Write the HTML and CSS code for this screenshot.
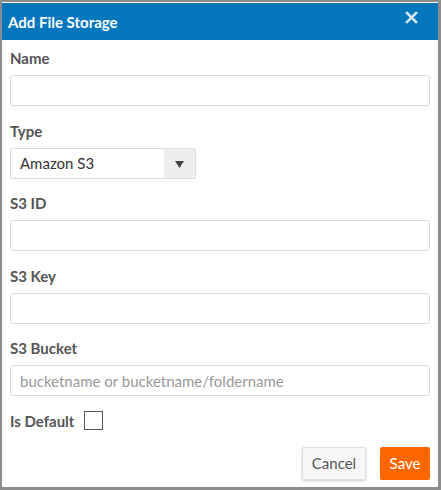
FILE: index.html
```html
<!DOCTYPE html>
<html>
<head>
<meta charset="utf-8">
<link rel="stylesheet" href="styles.css">
</head>
<body>
<div class="dialog">
  <div class="header">
    <span class="title">Add File Storage</span>
    <svg class="close" width="13" height="13" viewBox="0 0 13 13"><path d="M2 2 L11 11 M11 2 L2 11" stroke="#d6e8f5" stroke-width="2.6" stroke-linecap="square"/></svg>
  </div>
  <div class="body">
    <div class="group">
      <label class="label">Name</label>
      <input class="input" type="text">
    </div>
    <div class="group">
      <label class="label">Type</label>
      <div class="select">
        <span class="select-value">Amazon S3</span>
        <span class="select-btn"><svg width="9" height="7" viewBox="0 0 9 7"><path d="M0 0 H9 L4.5 7 Z" fill="#444"/></svg></span>
      </div>
    </div>
    <div class="group">
      <label class="label">S3 ID</label>
      <input class="input" type="text">
    </div>
    <div class="group">
      <label class="label">S3 Key</label>
      <input class="input" type="text">
    </div>
    <div class="group">
      <label class="label">S3 Bucket</label>
      <input class="input" type="text" placeholder="bucketname or bucketname/foldername">
    </div>
    <div class="check-row">
      <span class="label inline">Is Default</span>
      <span class="checkbox"></span>
    </div>
    <div class="actions">
      <button class="btn cancel">Cancel</button>
      <button class="btn save">Save</button>
    </div>
  </div>
</div>
</body>
</html>
```
FILE: styles.css
```css
html, body {
  margin: 0;
  padding: 0;
  background: #fff;
}
.dialog {
  width: 441px;
  height: 490px;
  box-sizing: border-box;
  border-style: solid;
  border-color: #8c8c8c;
  border-width: 2px 3px 3px 2px;
  background: #fff;
  font-family: Lato, "Liberation Sans", sans-serif;
  display: flex;
  flex-direction: column;
}
.header {
  margin-top: 1px;
  height: 37px;
  background: #0277bd;
  display: flex;
  align-items: center;
  justify-content: space-between;
  padding: 0 20px 0 6px;
}
.title {
  color: #fff;
  font-size: 15px;
  font-weight: bold;
  margin-top: 1px;
}
.close {
  margin-top: -8px;
}
.body {
  padding: 8px 8px 0 8px;
  display: flex;
  flex-direction: column;
}
.group {
  display: flex;
  flex-direction: column;
  margin-bottom: 14.5px;
}
.label {
  font-size: 15px;
  font-weight: bold;
  color: #555;
  line-height: 20px;
  margin-bottom: 7px;
}
.label.inline {
  margin-bottom: 0;
}
.input {
  height: 31px;
  box-sizing: border-box;
  border: 1px solid #dcdcdc;
  border-radius: 3px;
  padding: 0 9px;
  font-family: Lato, "Liberation Sans", sans-serif;
  font-size: 15px;
  color: #333;
  outline: none;
}
.input::placeholder {
  color: #999;
}
.select {
  width: 186px;
  height: 31px;
  box-sizing: border-box;
  border: 1px solid #dcdcdc;
  border-radius: 2px;
  display: flex;
  align-items: center;
  justify-content: space-between;
}
.select-value {
  padding-left: 9px;
  font-size: 15px;
  color: #333;
}
.select-btn {
  width: 31px;
  height: 100%;
  background: #eee;
  display: flex;
  align-items: center;
  justify-content: center;
  padding-top: 2px;
  box-sizing: border-box;
}
.check-row {
  display: flex;
  align-items: center;
  gap: 10px;
  margin-top: 0;
}
.checkbox {
  width: 17px;
  height: 17px;
  border: 1px solid #555;
  display: inline-block;
}
.actions {
  display: flex;
  justify-content: flex-end;
  gap: 14px;
  margin-top: 16px;
}
.btn {
  height: 33px;
  border-radius: 2px;
  font-family: Lato, "Liberation Sans", sans-serif;
  font-size: 15px;
  padding: 0 8px;
  cursor: pointer;
}
.cancel {
  background: #f7f7f7;
  border: 1px solid #e0e0e0;
  color: #555;
  box-shadow: 0 1px 3px rgba(0,0,0,0.2);
  width: 64px;
}
.save {
  background: #ff6600;
  border: none;
  color: #fff;
  width: 50px;
}
```
